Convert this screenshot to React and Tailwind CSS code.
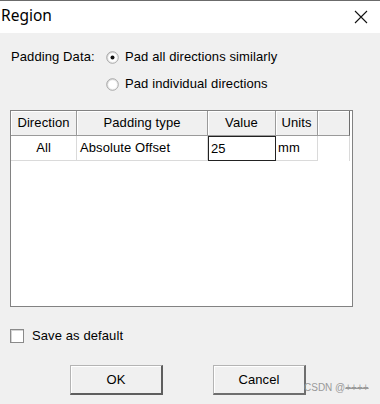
import React, { useState } from 'react';

const ui = { fontFamily: '"Liberation Sans", Arial, sans-serif' };

const Radio = ({ checked }) => (
    <svg width="13" height="13" viewBox="0 0 13 13" className="shrink-0">
        <defs>
            <linearGradient id="rg" x1="0" y1="0" x2="1" y2="1">
                <stop offset="0" stopColor="#d4d4d4" />
                <stop offset="1" stopColor="#ffffff" />
            </linearGradient>
        </defs>
        <circle cx="6.5" cy="6.5" r="5.8" fill="url(#rg)" stroke="#a0a0a0" strokeWidth="0.9" />
        <circle cx="6.5" cy="6.5" r="4.3" fill="#ffffff" />
        {checked && <circle cx="6.5" cy="6.5" r="2" fill="#111111" />}
    </svg>
);

const HeaderCell = ({ children, className }) => (
    <div
        className={`h-full flex items-center justify-center bg-[#f0f0f0] border-r border-b border-[#9a9a9a] shadow-[inset_1px_1px_0_#ffffff] ${className}`}
    >
        {children}
    </div>
);

const BevelButton = ({ children, isDefault }) => (
    <button
        className={`w-[93px] h-[30px] bg-[#f0f0f0] text-[13px] text-black border border-t-[#b4b4b4] border-l-[#b4b4b4] border-b-2 border-r-2 shadow-[inset_1px_1px_0_#ffffff] ${isDefault ? 'border-b-[#5e5e5e] border-r-[#5e5e5e]' : 'border-b-[#6e6e6e] border-r-[#6e6e6e]'}`}
        style={ui}
    >
        {children}
    </button>
);

export default function App() {
    const [mode, setMode] = useState('all');

    return (
        <div className="w-[380px] h-[404px] flex flex-col bg-[#f0f0f0] overflow-hidden" style={ui}>
            {/* Title bar */}
            <div className="h-[33px] shrink-0 bg-white border-t border-[#6b6b6b] flex items-center justify-between pl-[1px] pr-[12px]">
                <span className="text-[15.5px] text-black leading-none pb-[2px]" style={{ fontFamily: '"Noto Sans", "Open Sans", sans-serif' }}>
                    Region
                </span>
                <svg width="14" height="14" viewBox="0 0 14 14" className="mb-[1px]">
                    <path d="M1 1 L13 13 M13 1 L1 13" stroke="#111" strokeWidth="1.1" />
                </svg>
            </div>

            {/* Body */}
            <div className="flex-1 flex flex-col pl-[10px] pt-[16px] text-[13px] tracking-[0.1px] text-black">
                <div className="flex">
                    <div className="w-[96px] pl-[1px] h-[16px] flex items-center">Padding Data:</div>
                    <div className="flex flex-col gap-[11px]">
                        <label className="h-[16px] flex items-center gap-[6px]" onClick={() => setMode('all')}>
                            <Radio checked={mode === 'all'} />
                            <span>Pad all directions similarly</span>
                        </label>
                        <label className="h-[16px] flex items-center gap-[6px]" onClick={() => setMode('ind')}>
                            <Radio checked={mode === 'ind'} />
                            <span>Pad individual directions</span>
                        </label>
                    </div>
                </div>

                {/* Table */}
                <div className="mt-[18px] w-[343px] h-[197px] border border-[#828282] bg-white flex flex-col">
                    <div className="h-[25px] grid grid-cols-[66px_131px_68px_42px_32px]">
                        <HeaderCell>Direction</HeaderCell>
                        <HeaderCell>Padding type</HeaderCell>
                        <HeaderCell>Value</HeaderCell>
                        <HeaderCell>Units</HeaderCell>
                        <HeaderCell className="border-r-[#6e6e6e]"></HeaderCell>
                    </div>
                    <div className="h-[25px] grid grid-cols-[66px_131px_68px_42px_32px]">
                        <div className="flex items-center justify-center border-r border-b border-[#dadada]">All</div>
                        <div className="flex items-center pl-[3px] border-r border-b border-[#dadada]">Absolute Offset</div>
                        <div className="flex items-center pl-[2px] border border-[#222]">25</div>
                        <div className="flex items-center pl-[2px] border-r border-b border-[#dadada]">mm</div>
                        <div className="border-r border-[#dadada]"></div>
                    </div>
                </div>

                {/* Save as default */}
                <label className="mt-[21px] h-[16px] flex items-center gap-[8px]">
                    <span className="w-[14px] h-[14px] bg-white border border-[#8a8a8a] shadow-[inset_1px_1px_0_#d4d4d4]"></span>
                    <span>Save as default</span>
                </label>

                {/* Buttons */}
                <div className="mt-[21px] flex pl-[60px] gap-[50px] items-start">
                    <BevelButton isDefault>OK</BevelButton>
                    <div className="relative">
                        <BevelButton>Cancel</BevelButton>
                        <span className="absolute left-[91px] top-[18px] text-[10px] tracking-normal text-[#9a9a9a] whitespace-nowrap leading-none">
                            CSDN @<span className="line-through">++++</span>
                        </span>
                    </div>
                </div>
            </div>
        </div>
    );
}
